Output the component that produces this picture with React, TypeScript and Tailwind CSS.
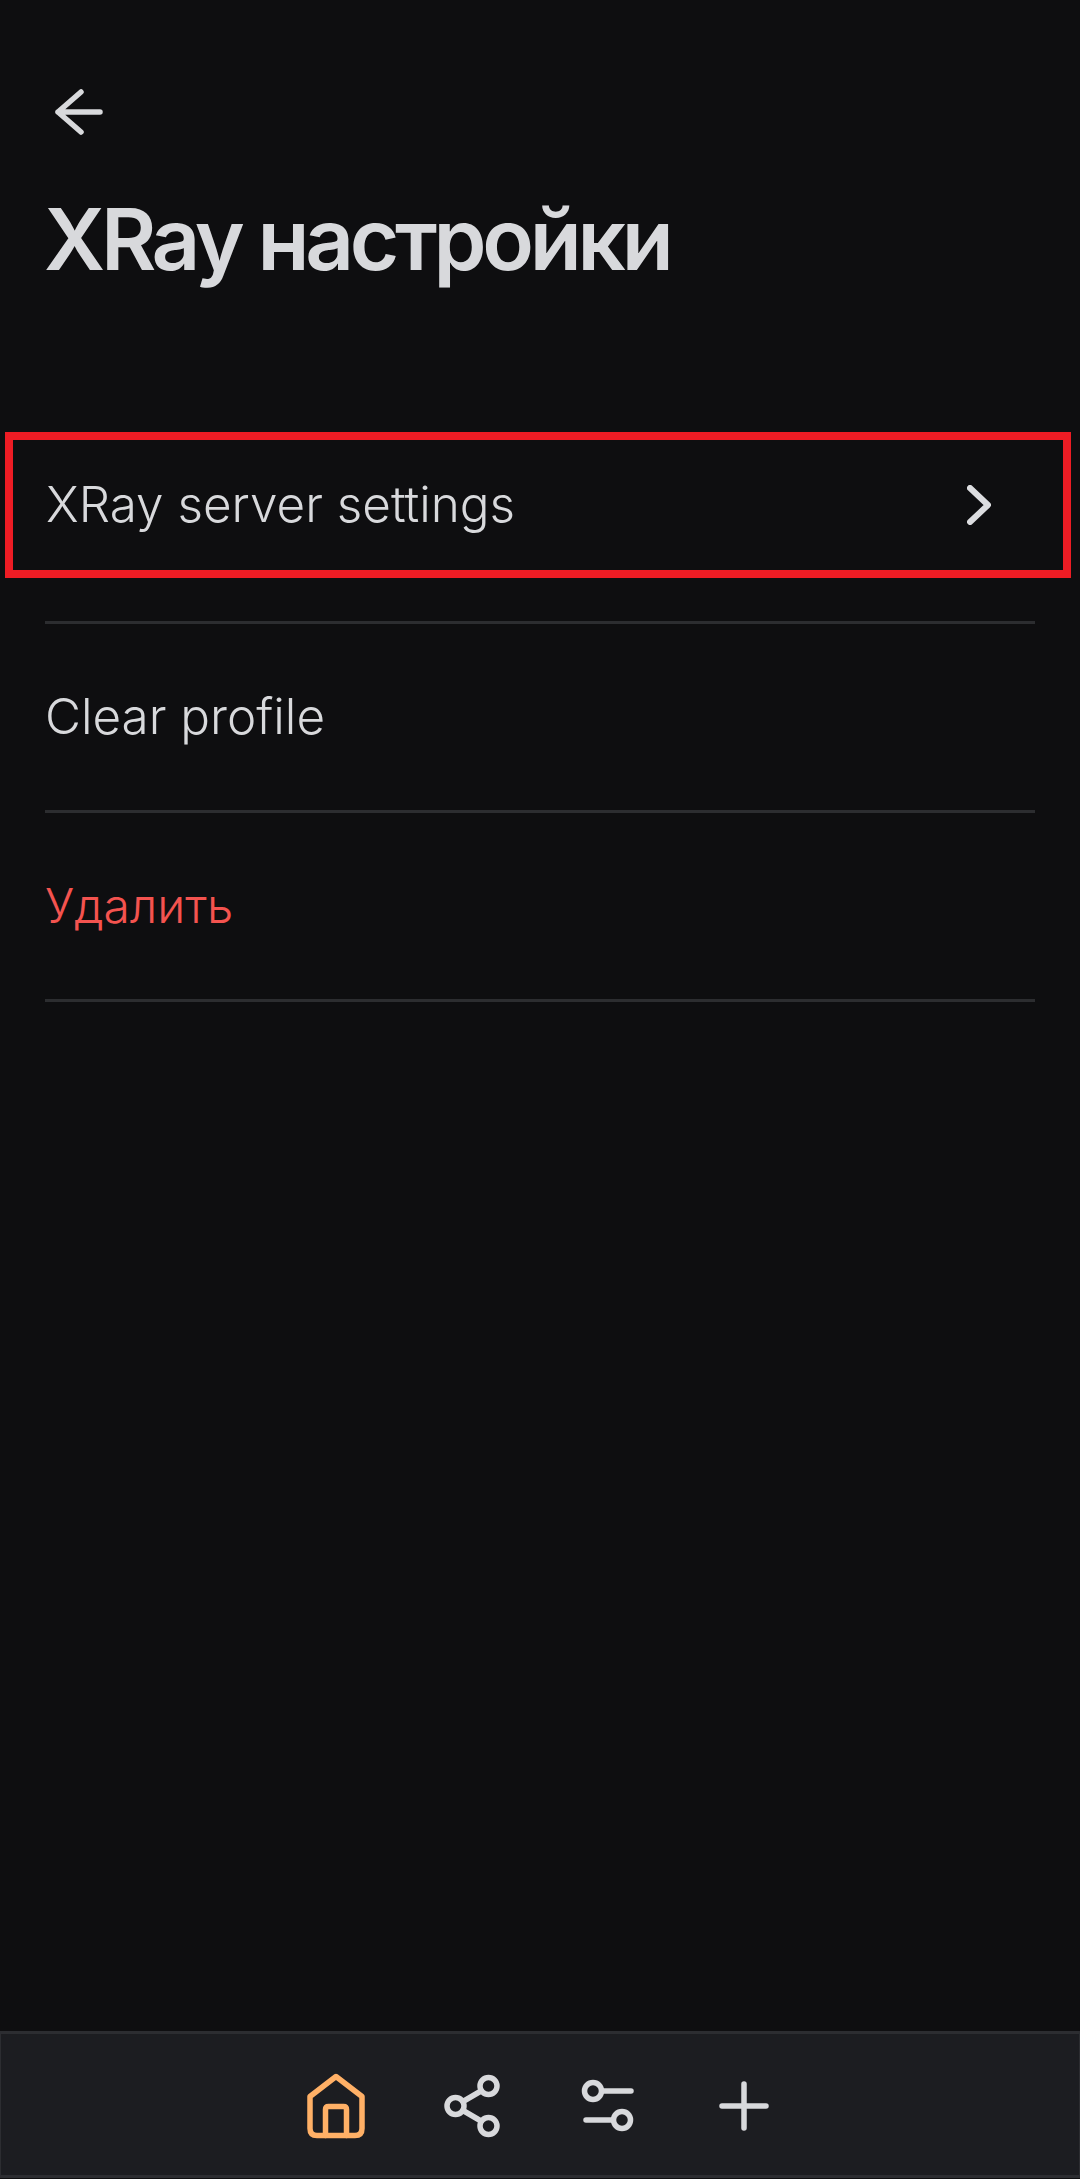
const font = { fontFamily: '"Inter", "Noto Sans", sans-serif' };

function Row({ label, red }: { label: string; red?: boolean }) {
  return (
    <div className="mx-[45px] h-[189px] border-b-[3px] border-[#2c2d30] flex items-center">
      <span className={`font-light leading-none ${red ? "text-[48px] text-[#f4534f]" : "text-[49.4px] text-[#d8d9dc]"}`}>{label}</span>
    </div>
  );
}

export default function App() {
  return (
    <div className="w-[1080px] h-[2179px] bg-[#0e0e10] flex flex-col" style={font}>
      <div className="flex-1 flex flex-col">
        <div className="pt-[89px] pl-[55px]">
          <svg width="48" height="46" viewBox="0 0 48 46" fill="none" stroke="#d8d9dc" strokeWidth="5.5" strokeLinecap="round" strokeLinejoin="round" className="block">
            <path d="M3 23H45M26 3L3 23L26 43" />
          </svg>
        </div>
        <h1 className="mt-[53px] ml-[44px] text-[85px] leading-[104px] font-semibold tracking-[-4.3px] text-[#d8d9dc]">XRay настройки</h1>
        <div className="mt-[140px] ml-[5px] mr-[9px] h-[146px] border-[8px] border-[#ed1c24] flex items-center justify-between pl-[33px] pr-[72px]">
          <span className="text-[49.4px] font-light leading-none text-[#d8d9dc]">XRay server settings</span>
          <svg width="24" height="40" viewBox="0 0 24 40" fill="none" stroke="#dcdde0" strokeWidth="6" strokeLinecap="round" strokeLinejoin="round" className="block">
            <path d="M3 3L21 20L3 37" />
          </svg>
        </div>
        <div className="h-[46px] mx-[45px] border-b-[3px] border-[#2c2d30]" />
        <Row label="Clear profile" />
        <Row label="Удалить" red />
      </div>
      <nav className="h-[147px] mb-[1px] pt-[2px] bg-[#1c1d21] border-y-[3px] border-x border-[#2c2d31] flex justify-center items-center">
        <div className="w-[136px] flex justify-center">
          <svg width="60" height="66" viewBox="0 0 60 66" fill="none" stroke="#ffb066" strokeWidth="5.5" strokeLinecap="round" strokeLinejoin="round" className="block">
            <path d="M30 3.5L56 23.5V55.5Q56 62.5 49 62.5H11Q4 62.5 4 55.5V23.5Z" />
            <path d="M19.5 62.5V36.5Q19.5 33.5 22.5 33.5H37.5Q40.5 33.5 40.5 36.5V62.5" />
          </svg>
        </div>
        <div className="w-[136px] flex justify-center">
          <svg width="60" height="66" viewBox="0 0 60 66" fill="none" stroke="#d8d9dc" strokeWidth="5.5" strokeLinecap="round" className="block">
            <circle cx="46.5" cy="13" r="8.5" />
            <circle cx="13.5" cy="33" r="8.5" />
            <circle cx="46.5" cy="53" r="8.5" />
            <path d="M21 28.5L39 18M21 37.5L39 48" />
          </svg>
        </div>
        <div className="w-[136px] flex justify-center">
          <svg width="60" height="66" viewBox="0 0 60 66" fill="none" stroke="#d8d9dc" strokeWidth="5.5" strokeLinecap="round" className="block">
            <circle cx="15" cy="18" r="8.5" />
            <circle cx="44" cy="47" r="8.5" />
            <path d="M24 18H53M8 47H35" />
          </svg>
        </div>
        <div className="w-[136px] flex justify-center">
          <svg width="60" height="66" viewBox="0 0 60 66" fill="none" stroke="#d8d9dc" strokeWidth="5.5" strokeLinecap="round" className="block">
            <path d="M30 11V55M8 33H52" />
          </svg>
        </div>
      </nav>
    </div>
  );
}
